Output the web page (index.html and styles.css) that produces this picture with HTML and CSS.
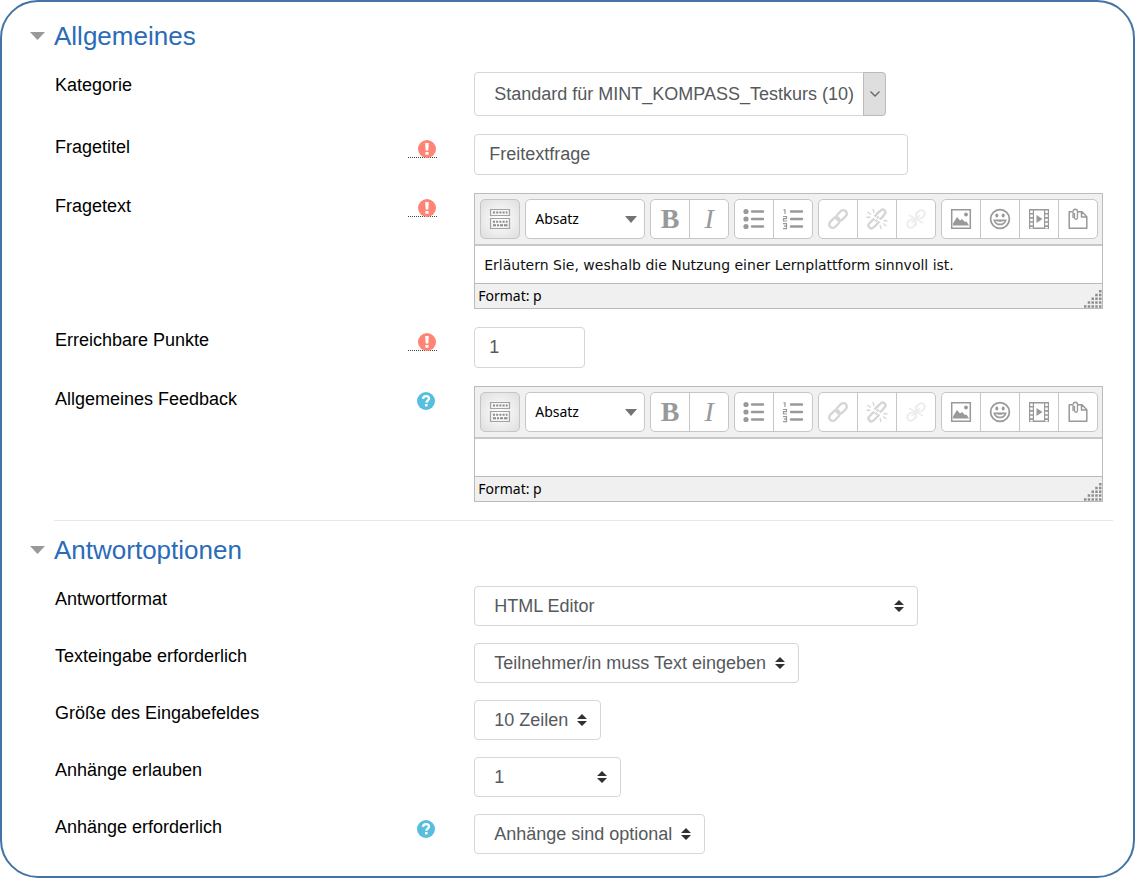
FILE: index.html
```
<!DOCTYPE html>
<html lang="de">
<head>
<meta charset="utf-8">
<meta name="viewport" content="width=device-width, initial-scale=1">
<title>Freitextfrage</title>
<link rel="stylesheet" href="styles.css">
</head>
<body>
<svg class="sprite" aria-hidden="true">
  <symbol id="i-caret" viewBox="0 0 15 8"><path d="M0 0h15L7.5 8z" fill="#999"/></symbol>
  <symbol id="i-required" viewBox="0 0 18 18"><circle cx="9" cy="9" r="9" fill="#ff8475"/><path d="M7.200 3h3.600l-.5 7.600H7.700z M7.400 12h3.200v2.800H7.400z" fill="#fff"/></symbol>
  <symbol id="i-help" viewBox="0 0 18 18"><circle cx="9" cy="9" r="9" fill="#56bfe0"/><path d="M6 6.900C6.100 4.900 7.300 4.200 9 4.200c1.800 0 3 .9 3 2.400 0 1.900-2.600 1.900-2.600 4.100" fill="none" stroke="#fff" stroke-width="2.300"/><path d="M8 12h2.600v2.400H8z" fill="#fff"/></symbol>
  <symbol id="i-sort" viewBox="0 0 10 12"><path d="M5 0l5 5H0z M0 7h10l-5 5z" fill="#2f3234"/></symbol>
  <symbol id="i-chevron" viewBox="0 0 10 6"><path d="M.5.5L5 5 9.500.5" fill="none" stroke="#666" stroke-width="1.300"/></symbol>
  <symbol id="i-down" viewBox="0 0 12 7"><path d="M0 0h12L6 7z" fill="#737373"/></symbol>
  <symbol id="i-toggle" viewBox="0 0 22 22">
    <path d="M1.500 1.500h19v6h-19z M1.500 10.500h19v10h-19z" fill="none" stroke="#a3a3a3" stroke-width="1.200"/>
    <path d="M4 4.500h14.500 M4 13.800h14.500" stroke="#8c8c8c" stroke-width="2" stroke-dasharray="2 1.200"/>
    <path d="M4 17.200h3m1 0h2m1 0h3m1 0h3.500" stroke="#8c8c8c" stroke-width="2"/>
  </symbol>
  <symbol id="i-ul" viewBox="0 0 22 22"><g fill="#999"><circle cx="3" cy="3.500" r="2.600"/><circle cx="3" cy="11" r="2.600"/><circle cx="3" cy="18.500" r="2.600"/></g><path d="M9 3.500h11M9 11h11M9 18.500h11" stroke="#999" stroke-width="2.400" stroke-linecap="round"/></symbol>
  <symbol id="i-ol" viewBox="0 0 22 22"><path d="M9 3.500h11M9 11h11M9 18.500h11" stroke="#999" stroke-width="2.400" stroke-linecap="round"/><path d="M1.500 1.800H3V6 M1 8.500h3.500v2.200H1.500v2.300H5 M1 15.700h3.500v5H1m1-2.500h2.500" fill="none" stroke="#999" stroke-width="1.200"/></symbol>
  <symbol id="i-link" viewBox="0 0 22 22"><g fill="none" stroke-width="2.400" transform="rotate(-45 11 11)"><rect x="0" y="7.500" width="12" height="7" rx="3.500"/><rect x="10" y="7.500" width="12" height="7" rx="3.500"/></g></symbol>
  <symbol id="i-unlink" viewBox="0 0 22 22"><g fill="none" stroke-width="2.400"><path d="M8.500 8.500l3.800-3.800 3.400-3c1.600-1 4.600 1.600 3.600 3.600L15.500 10l-2 1.200M11 8.500l1.500 1.800M13.500 13.500l-3.800 3.800-3.400 3c-1.600 1-5-2-3.600-4l4-4.300 1.800-1.200M11 13.500L9.500 11.800"/><path d="M7 1l1 4M1.500 4l3.500 2.500M.5 9l4 .5M15 21l-1-4M20.500 18L17 15.500M21.500 13l-4-.5" stroke-width="1.300"/></g></symbol>
  <symbol id="i-nolink" viewBox="0 0 22 22"><g fill="none" stroke-width="2"><g transform="rotate(-45 11 11)"><rect x="0" y="7.500" width="9" height="7" rx="3.500"/><rect x="13" y="7.500" width="9" height="7" rx="3.500"/></g><path d="M4 7l14 8M11 4v14M6.500 15L15 7" stroke-width="1.500"/></g></symbol>
  <symbol id="i-image" viewBox="0 0 22 22"><path d="M1.700 1.700h18.600v18.600H1.700z" fill="none" stroke="#999" stroke-width="1.500"/><path d="M3 17.500v-2l4-6.500 3 3.500 2-1.500 3 3 1.500-.5L19 17.500z" fill="#999"/><circle cx="16" cy="6.500" r="1.900" fill="#999"/></symbol>
  <symbol id="i-smile" viewBox="0 0 22 22"><circle cx="11" cy="11" r="9.400" fill="none" stroke="#999" stroke-width="1.700"/><ellipse cx="7.800" cy="7.500" rx="1.500" ry="2" fill="#999"/><ellipse cx="14.200" cy="7.500" rx="1.500" ry="2" fill="#999"/><path d="M4.300 11.500h13.400c-.5 3.500-3.200 5.800-6.700 5.800s-6.200-2.300-6.700-5.800z" fill="#999"/><path d="M6.200 12.800c3 1.300 6.600 1.300 9.600 0-1 2-2.700 2.800-4.800 2.800s-3.800-.8-4.800-2.800z" fill="#fff"/></symbol>
  <symbol id="i-media" viewBox="0 0 22 22"><path d="M1 1h5v20H1z M16 1h5v20h-5z" fill="#999"/><path d="M6 1.700h10M6 20.300h10" stroke="#999" stroke-width="1.400"/><path d="M3.500 2.500v18M18.500 2.500v18" stroke="#fff" stroke-width="2.600" stroke-dasharray="2.500 1.600"/><path d="M8.500 7l6 4-6 4z" fill="#999"/></symbol>
  <symbol id="i-files" viewBox="0 0 22 22"><path d="M5.500 3.700H2.200v16.600h17.600V8.700L15 3.700h-4.500M14.500 3.700v5.200h5.200" fill="none" stroke="#999" stroke-width="1.500" stroke-linejoin="round"/><path d="M6 10V3.500c0-3 4.500-3 4.500 0v6c0 2.400-3 2.400-3 0V5" fill="none" stroke="#999" stroke-width="1.300"/></symbol>
  <symbol id="i-grip" viewBox="0 0 18 18"><path d="M15 1.200h3M11.200 5H18M7.500 8.800H18M3.700 12.600H18M0 16.400h18" stroke="#8f8f8f" stroke-width="2.500" stroke-dasharray="2.500 1.250"/></symbol>
</svg>

<form class="panel">
  <section class="section">
    <h2 class="section-title"><button type="button" class="toggle" aria-expanded="true"><svg class="caret"><use href="#i-caret"/></svg>Allgemeines</button></h2>
    <div class="fields">
      <div class="row">
        <div class="label-cell"><label for="kategorie">Kategorie</label></div>
        <div class="pick pick-category">
          <select id="kategorie"><option>Standard für MINT_KOMPASS_Testkurs (10)</option></select>
          <span class="drop"><svg class="chevron"><use href="#i-chevron"/></svg></span>
        </div>
      </div>
      <div class="row">
        <div class="label-cell"><label for="titel">Fragetitel</label><span class="required" title="Pflichtfeld"><svg class="mark"><use href="#i-required"/></svg></span></div>
        <input class="text text-title" id="titel" type="text" value="Freitextfrage">
      </div>
      <div class="row">
        <div class="label-cell"><label for="fragetext">Fragetext</label><span class="required" title="Pflichtfeld"><svg class="mark"><use href="#i-required"/></svg></span></div>
        <div class="editor">
          <div class="toolbar">
            <button type="button" class="tool tool-toggle" aria-label="Symbolleisten"><svg class="glyph"><use href="#i-toggle"/></svg></button>
            <button type="button" class="format">Absatz<svg class="down"><use href="#i-down"/></svg></button>
            <div class="group"><button type="button" class="tool bold">B</button><button type="button" class="tool italic">I</button></div>
            <div class="group"><button type="button" class="tool" aria-label="Liste"><svg class="glyph"><use href="#i-ul"/></svg></button><button type="button" class="tool" aria-label="Nummerierte Liste"><svg class="glyph"><use href="#i-ol"/></svg></button></div>
            <div class="group"><button type="button" class="tool dim" aria-label="Link"><svg class="glyph"><use href="#i-link"/></svg></button><button type="button" class="tool dim" aria-label="Link entfernen"><svg class="glyph"><use href="#i-unlink"/></svg></button><button type="button" class="tool faint" aria-label="Nicht verlinken"><svg class="glyph"><use href="#i-nolink"/></svg></button></div>
            <div class="group"><button type="button" class="tool" aria-label="Bild"><svg class="glyph"><use href="#i-image"/></svg></button><button type="button" class="tool" aria-label="Emoticon"><svg class="glyph"><use href="#i-smile"/></svg></button><button type="button" class="tool" aria-label="Medien"><svg class="glyph"><use href="#i-media"/></svg></button><button type="button" class="tool" aria-label="Dateien"><svg class="glyph"><use href="#i-files"/></svg></button></div>
          </div>
          <textarea class="content" id="fragetext" rows="1">Erläutern Sie, weshalb die Nutzung einer Lernplattform sinnvoll ist.</textarea>
          <div class="status">Format: p<svg class="grip"><use href="#i-grip"/></svg></div>
        </div>
      </div>
      <div class="row">
        <div class="label-cell"><label for="punkte">Erreichbare Punkte</label><span class="required" title="Pflichtfeld"><svg class="mark"><use href="#i-required"/></svg></span></div>
        <input class="text text-points" id="punkte" type="text" value="1">
      </div>
      <div class="row">
        <div class="label-cell"><label for="feedback">Allgemeines Feedback</label><button type="button" class="help" aria-label="Hilfe"><svg class="mark"><use href="#i-help"/></svg></button></div>
        <div class="editor">
          <div class="toolbar">
            <button type="button" class="tool tool-toggle" aria-label="Symbolleisten"><svg class="glyph"><use href="#i-toggle"/></svg></button>
            <button type="button" class="format">Absatz<svg class="down"><use href="#i-down"/></svg></button>
            <div class="group"><button type="button" class="tool bold">B</button><button type="button" class="tool italic">I</button></div>
            <div class="group"><button type="button" class="tool" aria-label="Liste"><svg class="glyph"><use href="#i-ul"/></svg></button><button type="button" class="tool" aria-label="Nummerierte Liste"><svg class="glyph"><use href="#i-ol"/></svg></button></div>
            <div class="group"><button type="button" class="tool dim" aria-label="Link"><svg class="glyph"><use href="#i-link"/></svg></button><button type="button" class="tool dim" aria-label="Link entfernen"><svg class="glyph"><use href="#i-unlink"/></svg></button><button type="button" class="tool faint" aria-label="Nicht verlinken"><svg class="glyph"><use href="#i-nolink"/></svg></button></div>
            <div class="group"><button type="button" class="tool" aria-label="Bild"><svg class="glyph"><use href="#i-image"/></svg></button><button type="button" class="tool" aria-label="Emoticon"><svg class="glyph"><use href="#i-smile"/></svg></button><button type="button" class="tool" aria-label="Medien"><svg class="glyph"><use href="#i-media"/></svg></button><button type="button" class="tool" aria-label="Dateien"><svg class="glyph"><use href="#i-files"/></svg></button></div>
          </div>
          <textarea class="content" id="feedback" rows="1"></textarea>
          <div class="status">Format: p<svg class="grip"><use href="#i-grip"/></svg></div>
        </div>
      </div>
    </div>
  </section>

  <section class="section section-next">
    <h2 class="section-title"><button type="button" class="toggle" aria-expanded="true"><svg class="caret"><use href="#i-caret"/></svg>Antwortoptionen</button></h2>
    <div class="fields fields-tight">
      <div class="row">
        <div class="label-cell"><label for="format">Antwortformat</label></div>
        <div class="pick pick-wide"><select id="format"><option>HTML Editor</option></select><svg class="sort"><use href="#i-sort"/></svg></div>
      </div>
      <div class="row">
        <div class="label-cell"><label for="eingabe">Texteingabe erforderlich</label></div>
        <div class="pick"><select id="eingabe"><option>Teilnehmer/in muss Text eingeben</option></select><svg class="sort"><use href="#i-sort"/></svg></div>
      </div>
      <div class="row">
        <div class="label-cell"><label for="groesse">Größe des Eingabefeldes</label></div>
        <div class="pick"><select id="groesse"><option>10 Zeilen</option></select><svg class="sort"><use href="#i-sort"/></svg></div>
      </div>
      <div class="row">
        <div class="label-cell"><label for="erlauben">Anhänge erlauben</label></div>
        <div class="pick pick-small"><select id="erlauben"><option>1</option></select><svg class="sort"><use href="#i-sort"/></svg></div>
      </div>
      <div class="row">
        <div class="label-cell"><label for="anhaenge">Anhänge erforderlich</label><button type="button" class="help" aria-label="Hilfe"><svg class="mark"><use href="#i-help"/></svg></button></div>
        <div class="pick"><select id="anhaenge"><option>Anhänge sind optional</option></select><svg class="sort"><use href="#i-sort"/></svg></div>
      </div>
    </div>
  </section>
</form>
</body>
</html>
```
FILE: styles.css
```
* { box-sizing: border-box; }

body {
  margin: 0;
  background: #fff;
  color: #000;
  font: 18px/26px "Liberation Sans", Arial, sans-serif;
}

button, input, select, textarea { font: inherit; color: inherit; margin: 0; }
button { padding: 0; border: 0; background: none; }
svg { display: block; flex: none; }
.sprite { position: absolute; width: 0; height: 0; }

.panel {
  min-height: 100vh;
  padding: 18px 20px 20px 28px;
  border: 2px solid #4474a4;
  border-radius: 38px;
}

.section-title { margin: 0 0 20px; font-size: 26px; line-height: 32px; font-weight: 400; }
.toggle { display: flex; align-items: center; gap: 9px; color: #2a6cb8; }
.caret { width: 15px; height: 8px; }

.section-next::before {
  content: "";
  display: block;
  height: 1px;
  margin: 18px 0 13px 24px;
  background: #e8e8e8;
}

.fields { display: grid; gap: 18px; padding: 0 10px 0 25px; }
.fields-tight { gap: 17px; }
.row { display: grid; grid-template-columns: minmax(0, 2fr) minmax(0, 3fr); align-items: start; }

.label-cell { display: flex; justify-content: space-between; padding-right: 37px; }
.required { width: 29px; height: 18px; margin-top: 6px; padding-left: 10px; border-bottom: 1px dotted #444; }
.help { width: 29px; height: 18px; margin-top: 6px; padding-left: 9px; }
.mark { width: 18px; height: 18px; }

.text, .pick select {
  border: 1px solid #d6d6d6;
  border-radius: 4px;
  background: #fff;
  color: #55595c;
}
.text { width: 100%; height: 41px; padding: 0 14px; }
.text-title { max-width: 434px; }
.text-points { max-width: 111px; }

.pick { display: grid; justify-self: start; align-items: center; max-width: 100%; }
.pick > * { grid-area: 1 / 1; }
.pick select { appearance: none; width: 100%; height: 40px; padding: 0 31px 0 19px; }
.pick-category select { height: 44px; }
.pick-wide { width: 444px; }
.pick-small { width: 147px; }
.sort { width: 10px; height: 12px; justify-self: end; margin-right: 14px; pointer-events: none; }
.drop {
  display: flex;
  align-items: center;
  justify-content: center;
  justify-self: end;
  align-self: stretch;
  width: 23px;
  border: 1px solid #bbb;
  border-radius: 0 4px 4px 0;
  background: #dedede;
  pointer-events: none;
}
.chevron { width: 10px; height: 6px; }

.editor { border: 1px solid #bbb; font-family: "Noto Sans", sans-serif; font-size: 14px; }
.toolbar { display: flex; flex-wrap: wrap; gap: 5px; padding: 5px 0 5px 5px; background: #f0f0f0; border-bottom: 2px solid #c8c8c8; }
.group, .format, .tool-toggle { height: 40px; border: 1px solid #c6c6c6; border-radius: 5px; background: #fff; }
.group { display: flex; }
.tool { display: flex; align-items: center; justify-content: center; width: 38px; height: 38px; color: #999; }
.group .tool + .tool { width: 39px; border-left: 1px solid #c6c6c6; }
.tool-toggle { width: 40px; height: 40px; background: radial-gradient(#fff, #dedede); }
.glyph { width: 22px; height: 22px; stroke: none; }
.dim .glyph { stroke: #d6d6d6; }
.faint .glyph { stroke: #ededed; }
.bold, .italic { font-family: "Liberation Serif", serif; font-size: 28px; }
.bold { font-weight: 700; }
.italic { font-style: italic; }
.format { display: flex; align-items: center; justify-content: space-between; width: 120px; padding: 0 7px 0 9px; color: #000; }
.down { width: 12px; height: 7px; }
.content {
  display: block;
  width: 100%;
  height: 37px;
  padding: 6px 9px;
  border: 0;
  resize: none;
  overflow: hidden;
  background: #fff;
  color: #111;
  font-family: "DejaVu Sans", sans-serif;
  font-size: 14px;
}
.status { display: flex; justify-content: space-between; align-items: flex-end; padding-left: 3px; line-height: 24px; background: #f0f0f0; border-top: 1px solid #bbb; color: #000; }
.grip { width: 18px; height: 18px; }
```
